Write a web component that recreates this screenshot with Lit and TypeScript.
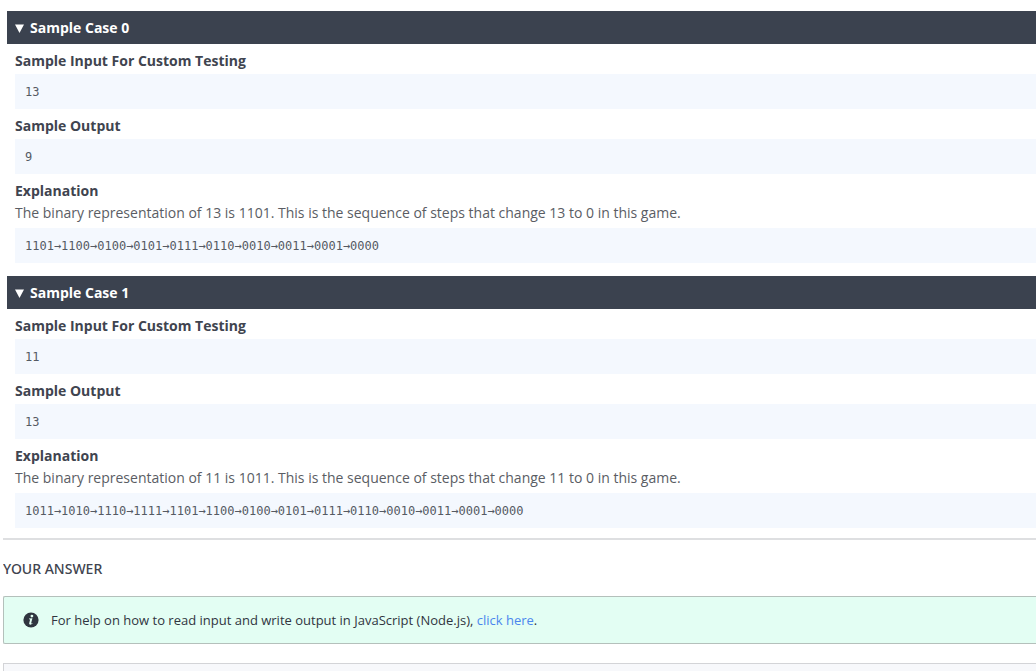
import { LitElement, html, css } from "lit";
import { customElement, property } from "lit/decorators.js";

interface SampleCase {
  input: string;
  output: string;
  explanation: string;
  steps: string;
}

const CASES: SampleCase[] = [
  {
    input: "13",
    output: "9",
    explanation:
      "The binary representation of 13 is 1101. This is the sequence of steps that change 13 to 0 in this game.",
    steps: "1101→1100→0100→0101→0111→0110→0010→0011→0001→0000",
  },
  {
    input: "11",
    output: "13",
    explanation:
      "The binary representation of 11 is 1011. This is the sequence of steps that change 11 to 0 in this game.",
    steps:
      "1011→1010→1110→1111→1101→1100→0100→0101→0111→0110→0010→0011→0001→0000",
  },
];

@customElement("sample-case")
export class SampleCaseElement extends LitElement {
  @property({ type: Number }) index = 0;
  @property({ attribute: false }) data!: SampleCase;

  static styles = css`
    :host {
      display: block;
    }
    .bar {
      display: flex;
      align-items: center;
      gap: 6px;
      padding: 6px 8px 5px;
      background: #3b424f;
      color: #fff;
      font-size: 14px;
      font-weight: 700;
      line-height: 22px;
      cursor: pointer;
      list-style: none;
    }
    .bar::-webkit-details-marker {
      display: none;
    }
    .marker {
      width: 9px;
      height: 9px;
      fill: currentColor;
      transform: rotate(-90deg);
    }
    .case[open] .marker {
      transform: none;
    }
    .content {
      padding-left: 8px;
    }
    .label {
      margin: 0;
      padding: 6px 0 2px;
      font-size: 14px;
      font-weight: 700;
      line-height: 22px;
      color: #40444f;
    }
    .label.tight {
      padding-bottom: 0;
    }
    .text {
      margin: 0;
      padding-bottom: 4px;
      line-height: 22px;
      color: #5a5d64;
    }
    .code {
      margin: 0;
      padding: 9px 10px 8px;
      background: #f4f8fe;
      color: #555a63;
      font-family: "DejaVu Sans Mono", "Liberation Mono", monospace;
      font-size: 12px;
      line-height: 18px;
    }
  `;

  render() {
    return html`
      <details class="case" open>
        <summary class="bar">
          <svg class="marker" viewBox="0 0 9 9" aria-hidden="true">
            <path d="M0 0.5h9L4.5 9z" />
          </svg>
          <span>Sample Case ${this.index}</span>
        </summary>
        <div class="content">
          <h3 class="label">Sample Input For Custom Testing</h3>
          <pre class="code">${this.data.input}</pre>
          <h3 class="label">Sample Output</h3>
          <pre class="code">${this.data.output}</pre>
          <h3 class="label tight">Explanation</h3>
          <p class="text">${this.data.explanation}</p>
          <pre class="code">${this.data.steps}</pre>
        </div>
      </details>
    `;
  }
}

@customElement("app-root")
export class AppRoot extends LitElement {
  static styles = css`
    :host {
      display: block;
      min-height: 100vh;
      box-sizing: border-box;
      padding: 11px 0 0 3px;
      overflow: hidden;
      background: #fff;
      color: #40444f;
      font-family: "Open Sans", "Noto Sans", sans-serif;
      font-size: 14px;
    }
    .cases {
      display: flex;
      flex-direction: column;
      gap: 13px;
      padding: 0 0 10px 4px;
      border-bottom: 2px solid #dedfe1;
    }
    .heading {
      margin: 0;
      padding: 18px 0 16px;
      font-family: "Noto Sans", "Open Sans", sans-serif;
      font-size: 14px;
      font-weight: 500;
      line-height: 22px;
    }
    .help {
      display: flex;
      align-items: center;
      gap: 12px;
      padding: 12px 19px;
      border: 1px solid #b4c0bb;
      border-right: 0;
      border-radius: 2px 0 0 2px;
      background: #e3fef3;
      font-size: 13px;
      font-weight: 500;
      line-height: 22px;
    }
    .info {
      flex: none;
      width: 16px;
      height: 16px;
    }
    .message {
      margin: 0;
      color: #30353f;
    }
    .link {
      color: #4a86ee;
      text-decoration: none;
    }
    .editor {
      height: 40px;
      margin-top: 19px;
      border: 1px solid #d3d4d7;
      border-right: 0;
      background: #f7f8fb;
    }
    .page {
      height: calc(100vh - 11px);
      overflow: hidden;
    }
  `;

  render() {
    return html`
      <main class="page">
        <section class="cases">
          ${CASES.map(
            (c, i) => html`<sample-case .index=${i} .data=${c}></sample-case>`
          )}
        </section>
        <h2 class="heading">YOUR ANSWER</h2>
        <div class="help">
          <svg class="info" viewBox="0 0 16 16" aria-hidden="true">
            <circle cx="8" cy="8" r="7.6" fill="#30353f" />
            <circle cx="8.9" cy="4.1" r="1.4" fill="#e3fef3" />
            <path
              d="M6 6.6l3.4-.4-1.2 4.9c-.1.5.2.6 1.1-.1l.3.5c-1.5 1.6-3.7 1.6-3.4-.3l.8-3.2c.1-.5 0-.7-1-.8z"
              fill="#e3fef3"
            />
          </svg>
          <p class="message">
            For help on how to read input and write output in JavaScript
            (Node.js), <a class="link" href="#">click here</a>.
          </p>
        </div>
        <div class="editor"></div>
      </main>
    `;
  }
}
